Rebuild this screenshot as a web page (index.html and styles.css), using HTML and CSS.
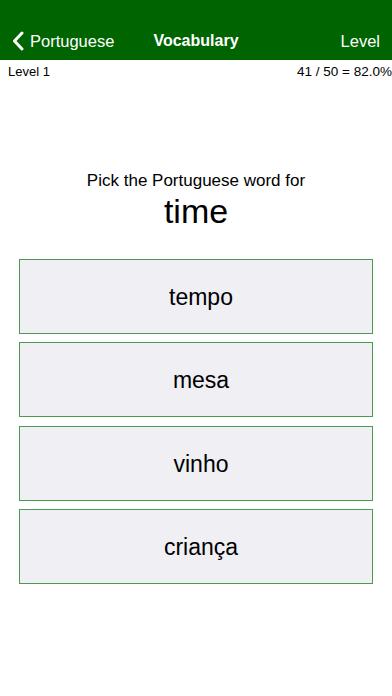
FILE: index.html
```html
<!DOCTYPE html>
<html>
<head>
<meta charset="utf-8">
<link rel="stylesheet" href="styles.css">
</head>
<body>
<header class="navbar">
  <div class="nav-left">
    <svg class="chev" width="12" height="20" viewBox="0 0 12 20"><path d="M10 2 L2.5 10 L10 18" fill="none" stroke="#fff" stroke-width="3" stroke-linecap="round" stroke-linejoin="round"/></svg>
    <span>Portuguese</span>
  </div>
  <div class="nav-title">Vocabulary</div>
  <div class="nav-right">Level</div>
</header>
<div class="status">
  <span>Level 1</span>
  <span class="score">41 / 50 = 82.0%</span>
</div>
<main class="content">
  <div class="prompt">Pick the Portuguese word for</div>
  <div class="word">time</div>
  <div class="choices">
    <div class="choice">tempo</div>
    <div class="choice">mesa</div>
    <div class="choice">vinho</div>
    <div class="choice">criança</div>
  </div>
</main>
</body>
</html>
```
FILE: styles.css
```css
html, body {
  margin: 0;
  padding: 0;
  background: #fff;
  font-family: "Liberation Sans", Arial, sans-serif;
  color: #000;
}
.navbar {
  height: 60px;
  background: #006400;
  color: #fff;
  display: flex;
  align-items: flex-end;
  justify-content: space-between;
  padding: 0 12px 9px 12px;
  box-sizing: border-box;
  font-size: 16.5px;
  position: relative;
}
.nav-left {
  display: flex;
  align-items: center;
  gap: 6px;
}
.chev { display: block; }
.nav-title {
  position: absolute;
  left: 0;
  right: 0;
  bottom: 9px;
  text-align: center;
  font-weight: bold;
  font-size: 16px;
  line-height: 20px;
  pointer-events: none;
}
.nav-left span, .nav-right { line-height: 20px; }
.status {
  display: flex;
  justify-content: space-between;
  padding: 4px 0 0 8px;
  font-size: 13px;
  line-height: 16px;
}
.score { font-size: 13.5px; }
.content {
  padding-top: 90px;
  text-align: center;
}
.prompt {
  font-size: 17px;
  line-height: 22px;
}
.word {
  font-size: 34px;
  line-height: 38px;
}
.choices {
  margin: 29px 19px 0 19px;
  display: flex;
  flex-direction: column;
  gap: 8.3px;
}
.choice {
  height: 75px;
  box-sizing: border-box;
  border: 1px solid #4c9a4c;
  background: #efeff4;
  display: flex;
  align-items: center;
  justify-content: center;
  font-size: 23px;
  padding: 2px 0 0 10px;
}
```
